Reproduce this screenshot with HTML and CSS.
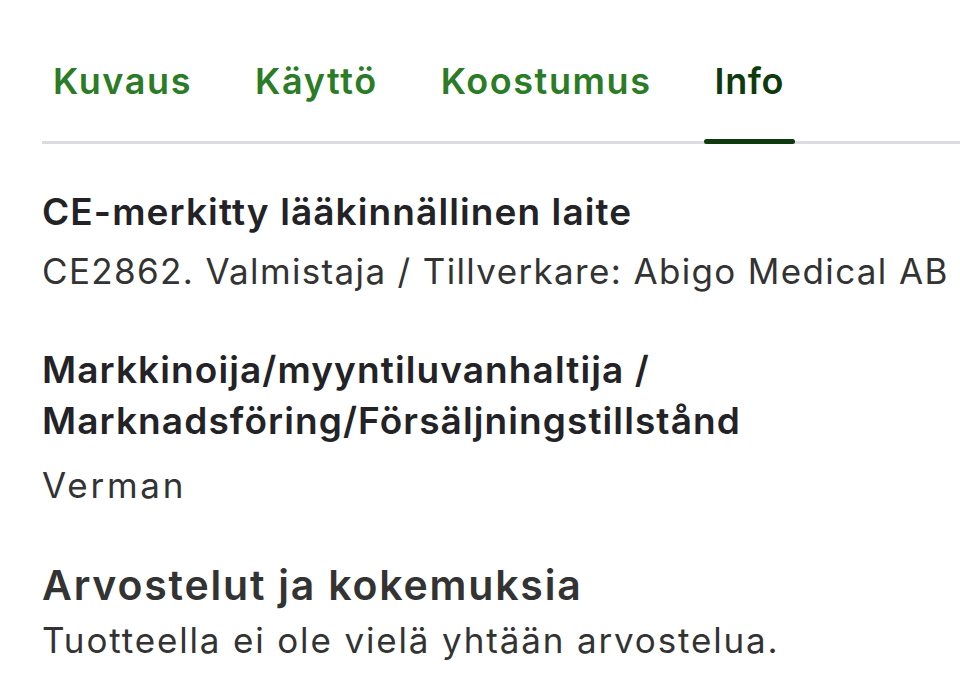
FILE: index.html
```html
<!DOCTYPE html>
<html lang="fi">
<head>
<meta charset="utf-8">
<title>Info</title>
<link rel="stylesheet" href="styles.css">
</head>
<body>
<div class="page">
  <nav class="tabs">
    <a class="tab">Kuvaus</a>
    <a class="tab">Käyttö</a>
    <a class="tab">Koostumus</a>
    <a class="tab active">Info</a>
  </nav>
  <section class="info">
    <h3 class="label">CE-merkitty lääkinnällinen laite</h3>
    <p class="value">CE2862. Valmistaja / Tillverkare: Abigo Medical AB</p>
    <h3 class="label second">Markkinoija/myyntiluvanhaltija / Marknadsföring/Försäljningstillstånd</h3>
    <p class="value short">Verman</p>
  </section>
  <section class="reviews">
    <h2 class="reviews-title">Arvostelut ja kokemuksia</h2>
    <p class="reviews-empty">Tuotteella ei ole vielä yhtään arvostelua.</p>
  </section>
</div>
</body>
</html>
```

FILE: styles.css
```css
html, body {
  margin: 0;
  padding: 0;
  background: #ffffff;
}
body {
  font-family: Inter, "Noto Sans", sans-serif;
  overflow: hidden;
}
.page {
  padding: 59px 0 0 42px;
  width: 918px;
}
.tabs {
  display: flex;
  gap: 41px;
  border-bottom: 3px solid #dcdce0;
}
.tab {
  position: relative;
  padding: 0 11px 38px;
  font-size: 36px;
  line-height: 44px;
  font-weight: 600;
  letter-spacing: 1.6px;
  color: #2b7b27;
  white-space: nowrap;
}
.tab.active {
  color: #0f3a10;
  letter-spacing: 0.6px;
}
.tab.active::after {
  content: "";
  position: absolute;
  left: 0;
  right: 0;
  bottom: -3px;
  height: 5px;
  border-radius: 3px;
  background: #0f3a10;
}
.info {
  padding-top: 42px;
}
.label {
  margin: 0;
  font-size: 37px;
  line-height: 51px;
  font-weight: 600;
  letter-spacing: 1.1px;
  color: #232327;
  width: 760px;
}
.label.second {
  margin-top: 47px;
}
.value {
  margin: 9px 0 0;
  font-size: 35px;
  line-height: 51px;
  font-weight: 400;
  letter-spacing: 1.35px;
  color: #333333;
  white-space: nowrap;
}
.value.short {
  margin-top: 14px;
  letter-spacing: 2.8px;
}
.reviews {
  padding-top: 49px;
}
.reviews-title {
  margin: 0;
  font-size: 41px;
  line-height: 51px;
  font-weight: 600;
  letter-spacing: 1.8px;
  color: #333333;
}
.reviews-empty {
  margin: 4px 0 0;
  font-size: 35px;
  line-height: 51px;
  letter-spacing: 1.85px;
  color: #333333;
  white-space: nowrap;
}
```
